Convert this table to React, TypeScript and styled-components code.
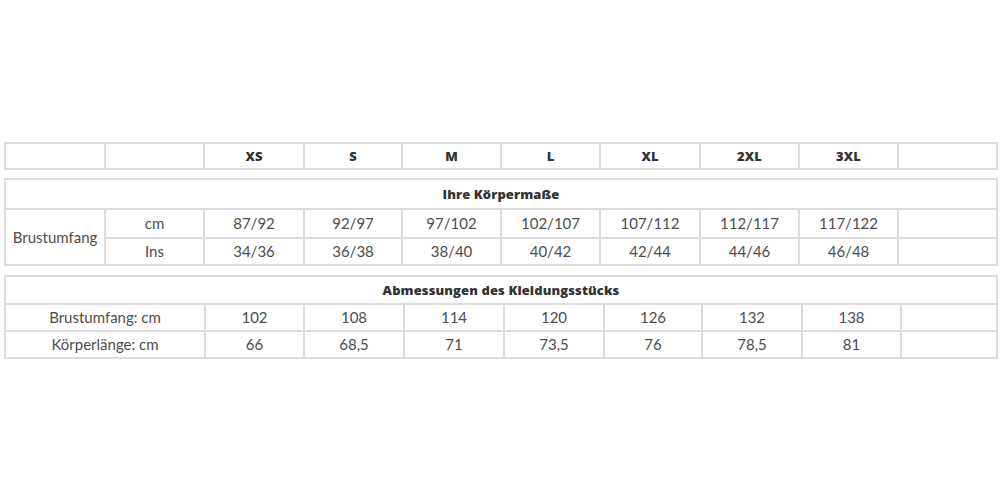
import React from "react";
import styled, { createGlobalStyle } from "styled-components";

const Global = createGlobalStyle`
  html, body { margin: 0; padding: 0; background: #fff; }
  body { font-family: Lato, "Open Sans", "Liberation Sans", sans-serif; color: #4a4a4a; }
`;

const Page = styled.div`
  width: 1000px;
  height: 501px;
  box-sizing: border-box;
  padding: 142px 0 0 4px;
  display: flex;
  flex-direction: column;
  gap: 8px;
`;

const Table = styled.table<{ $mt?: number }>`
  border-collapse: collapse;
  table-layout: fixed;
  width: 992px;
  margin-top: ${(p) => p.$mt ?? 0}px;
`;

const Cell = styled.td<{ $h: number; $bold?: boolean }>`
  border: 2px solid #dcdcdc;
  height: ${(p) => p.$h}px;
  padding: 0;
  box-sizing: border-box;
  text-align: center;
  vertical-align: middle;
  font-family: ${(p) => (p.$bold ? `"Open Sans", Lato, sans-serif` : `Lato, "Open Sans", sans-serif`)};
  font-size: ${(p) => (p.$bold ? "13px" : "15px")};
  font-weight: ${(p) => (p.$bold ? 800 : 400)};
  letter-spacing: ${(p) => (p.$bold ? "0.1px" : "0")};
  color: ${(p) => (p.$bold ? "#333" : "#4d4d4d")};
  line-height: 1;
`;

const sizes = ["XS", "S", "M", "L", "XL", "2XL", "3XL"];
const cm = ["87/92", "92/97", "97/102", "102/107", "107/112", "112/117", "117/122"];
const ins = ["34/36", "36/38", "38/40", "40/42", "42/44", "44/46", "46/48"];
const brust = ["102", "108", "114", "120", "126", "132", "138"];
const laenge = ["66", "68,5", "71", "73,5", "76", "78,5", "81"];

const tenCols = [100, 99, 100, 98, 99, 99, 100, 99, 99, 99];
const nineCols = [200, 99, 100, 100, 100, 98, 100, 99, 96];

export default function App() {
  return (
    <>
      <Global />
      <Page>
        <Table>
          <colgroup>
            {tenCols.map((w, i) => (
              <col key={i} style={{ width: w }} />
            ))}
          </colgroup>
          <tbody>
            <tr>
              <Cell $h={26} />
              <Cell $h={26} />
              {sizes.map((s) => (
                <Cell key={s} $h={26} $bold>
                  {s}
                </Cell>
              ))}
              <Cell $h={26} />
            </tr>
          </tbody>
        </Table>

        <Table>
          <colgroup>
            {tenCols.map((w, i) => (
              <col key={i} style={{ width: w }} />
            ))}
          </colgroup>
          <tbody>
            <tr>
              <Cell $h={30} $bold colSpan={10}>
                Ihre Körpermaße
              </Cell>
            </tr>
            <tr>
              <Cell $h={29} rowSpan={2}>
                Brustumfang
              </Cell>
              <Cell $h={29}>cm</Cell>
              {cm.map((v) => (
                <Cell key={v} $h={29}>
                  {v}
                </Cell>
              ))}
              <Cell $h={29} />
            </tr>
            <tr>
              <Cell $h={27}>Ins</Cell>
              {ins.map((v) => (
                <Cell key={v} $h={27}>
                  {v}
                </Cell>
              ))}
              <Cell $h={27} />
            </tr>
          </tbody>
        </Table>

        <Table $mt={1}>
          <colgroup>
            {nineCols.map((w, i) => (
              <col key={i} style={{ width: w }} />
            ))}
          </colgroup>
          <tbody>
            <tr>
              <Cell $h={28} $bold colSpan={9}>
                Abmessungen des Kleidungsstücks
              </Cell>
            </tr>
            <tr>
              <Cell $h={27}>Brustumfang: cm</Cell>
              {brust.map((v) => (
                <Cell key={v} $h={27}>
                  {v}
                </Cell>
              ))}
              <Cell $h={27} />
            </tr>
            <tr>
              <Cell $h={27}>Körperlänge: cm</Cell>
              {laenge.map((v) => (
                <Cell key={v} $h={27}>
                  {v}
                </Cell>
              ))}
              <Cell $h={27} />
            </tr>
          </tbody>
        </Table>
      </Page>
    </>
  );
}
